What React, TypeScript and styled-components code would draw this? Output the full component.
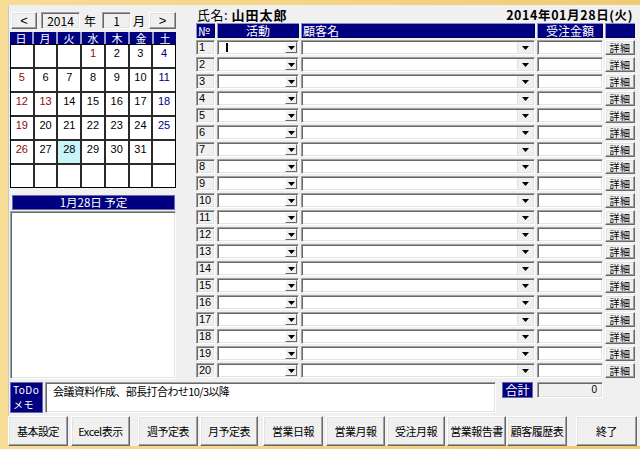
import React from 'react';
import styled, { createGlobalStyle, css } from 'styled-components';

const GlobalStyle = createGlobalStyle`
  html, body { margin: 0; padding: 0; background: #f0f0f0; }
  body { font-family: "Noto Sans CJK JP", "Noto Sans", sans-serif; }
  * { box-sizing: border-box; }
`;

const FONT = `"Noto Sans CJK JP", "Noto Sans", sans-serif`;
const NAVY = '#000080';

const raised = css`
  background: #f0f0f0;
  border: 1px solid;
  border-color: #ffffff #696969 #696969 #ffffff;
  box-shadow: inset -1px -1px 0 #a0a0a0, inset 1px 1px 0 #e3e3e3;
`;

const sunken = css`
  border: 1px solid;
  border-color: #a0a0a0 #ffffff #ffffff #a0a0a0;
  box-shadow: inset 1px 1px 0 #696969, inset -1px -1px 0 #e3e3e3;
`;

const Frame = styled.div`
  width: 640px;
  height: 449px;
  padding: 5px 0 3px 8px;
  background: linear-gradient(to right, #f7dc96, #f1cb74);
  font-family: ${FONT};
  color: #000;
  overflow: hidden;
`;

const Window = styled.div`
  height: 100%;
  background: #f0f0f0;
  box-shadow: inset 1px 0 0 #c8c8c8;
  display: flex;
  flex-direction: column;
`;

const TopArea = styled.div`
  display: flex;
  height: 375px;
`;

const LeftCol = styled.div`
  width: 168px;
  padding: 7px 0 0 2px;
  display: flex;
  flex-direction: column;
`;

const NavRow = styled.div`
  display: flex;
  align-items: center;
  height: 17px;
`;

const NavButton = styled.div<{ $ml: number; $w: number }>`
  ${raised};
  margin-left: ${p => p.$ml}px;
  width: ${p => p.$w}px;
  height: 17px;
  display: flex;
  align-items: center;
  justify-content: center;
  font-family: "Liberation Sans", sans-serif;
  font-size: 13px;
  line-height: 1;
`;

const NumBox = styled.div<{ $ml: number; $w: number }>`
  ${sunken};
  background: #f0f0f0;
  margin-left: ${p => p.$ml}px;
  width: ${p => p.$w}px;
  height: 17px;
  font-size: 12px;
  line-height: 15px;
  text-align: center;
`;

const Unit = styled.span<{ $ml: number }>`
  margin-left: ${p => p.$ml}px;
  font-size: 12px;
  line-height: 17px;
`;

const CalHead = styled.div`
  margin-top: 3px;
  height: 12px;
  display: grid;
  grid-template-columns: repeat(7, 1fr);
  column-gap: 2px;
  background: #9c9ccc;
`;

const CalHeadCell = styled.div`
  background: ${NAVY};
  color: #fff;
  font-size: 11px;
  line-height: 12px;
  text-align: center;
`;

const CalGrid = styled.div`
  height: 144px;
  display: grid;
  grid-template-columns: repeat(7, 1fr);
  grid-template-rows: repeat(6, 1fr);
  gap: 2px;
  background: #2a2a2a;
  border: 1px solid #000;
`;

const DayCell = styled.div<{ $color: string; $today?: boolean }>`
  background: ${p => (p.$today ? '#c9f4f8' : '#ffffff')};
  color: ${p => p.$color};
  font-family: "Liberation Sans", sans-serif;
  font-size: 11px;
  line-height: 12px;
  padding-top: 2px;
  text-align: center;
`;

const PlanHead = styled.div`
  margin: 7px 1px 0 2px;
  height: 15px;
  background: ${NAVY};
  border: 1px solid #6a6aa8;
  color: #fff;
  font-size: 11.5px;
  line-height: 13px;
  text-align: center;
`;

const PlanBox = styled.div`
  ${sunken};
  margin-top: 1px;
  height: 168px;
  background: #fff;
`;

const RightCol = styled.div`
  margin-left: 20px;
  width: 439px;
  display: flex;
  flex-direction: column;
`;

const NameRow = styled.div`
  height: 18px;
  display: flex;
  align-items: center;
  justify-content: space-between;
`;

const NameText = styled.div`
  font-size: 13px;
  padding-left: 1px;
  letter-spacing: 0.5px;
`;

const NameBold = styled.span`
  font-weight: bold;
  letter-spacing: 1px;
`;

const DateText = styled.div`
  font-size: 12.5px;
  font-weight: bold;
  letter-spacing: 0.6px;
  padding-right: 2px;
  white-space: nowrap;
`;

const COLS = '19px 82px 234px 66px 30px';

const HeadRow = styled.div`
  height: 15px;
  display: grid;
  grid-template-columns: ${COLS};
  column-gap: 2px;
`;

const HeadCell = styled.div<{ $align: 'left' | 'center' }>`
  background: ${NAVY};
  box-shadow: inset 1px 1px 0 #8e8ec8, inset -1px -1px 0 #000050;
  color: #fff;
  font-size: 12px;
  line-height: 15px;
  text-align: ${p => p.$align};
  padding-left: ${p => (p.$align === 'left' ? 2 : 0)}px;
  overflow: hidden;
  white-space: nowrap;
`;

const Rows = styled.div`
  margin-top: 2px;
  display: flex;
  flex-direction: column;
  gap: 2px;
`;

const Row = styled.div`
  height: 15px;
  display: grid;
  grid-template-columns: ${COLS};
  column-gap: 2px;
`;

const NoCell = styled.div`
  ${sunken};
  background: #f0f0f0;
  font-family: "Liberation Sans", sans-serif;
  font-size: 11px;
  line-height: 13px;
  padding-left: 2px;
  white-space: nowrap;
`;

const Combo = styled.div`
  ${sunken};
  background: #fff;
  display: flex;
  align-items: stretch;
  padding: 1px;
`;

const ComboText = styled.div`
  flex: 1;
  display: flex;
  align-items: center;
  padding-left: 7px;
`;

const Caret = styled.span`
  width: 2px;
  height: 9px;
  background: #000;
`;

const DropBtn = styled.div<{ $flat?: boolean; $w: number }>`
  width: ${p => p.$w}px;
  display: flex;
  align-items: center;
  justify-content: center;
  ${p =>
    p.$flat
      ? css`
          background: #f0f0f0;
          border-left: 1px solid #e2e2e2;
        `
      : css`
          background: #f0f0f0;
          border: 1px solid;
          border-color: #ffffff #696969 #696969 #ffffff;
        `}
`;

const AmountBox = styled.div`
  ${sunken};
  background: #fff;
`;

const DetailBtn = styled.div`
  ${raised};
  font-size: 10px;
  line-height: 13px;
  text-align: center;
  letter-spacing: 0.5px;
`;

const MemoRow = styled.div`
  margin-top: 2px;
  height: 31px;
  padding-left: 2px;
  display: flex;
  align-items: flex-start;
`;

const TodoLabel = styled.div`
  width: 33px;
  height: 31px;
  background: ${NAVY};
  border: 1px solid #6a6aa8;
  color: #fff;
  font-size: 10px;
  padding: 0 0 0 2px;
  letter-spacing: 0.5px;
  display: flex;
  flex-direction: column;
  justify-content: space-between;
`;

const TodoLine = styled.div`
  line-height: 14px;
  height: 14px;
`;

const MemoBox = styled.div`
  ${sunken};
  margin-left: 2px;
  width: 451px;
  height: 31px;
  background: #fff;
  font-size: 11px;
  line-height: 13px;
  padding: 2px 0 0 7px;
  letter-spacing: -0.6px;
  white-space: nowrap;
`;

const SumLabel = styled.div`
  margin-left: 6px;
  width: 31px;
  height: 16px;
  background: ${NAVY};
  border: 1px solid #6a6aa8;
  color: #fff;
  font-size: 12px;
  line-height: 14px;
  text-align: center;
`;

const SumBox = styled.div`
  ${sunken};
  margin-left: 4px;
  width: 66px;
  height: 16px;
  background: #f0f0f0;
  font-family: "Liberation Sans", sans-serif;
  font-size: 10px;
  line-height: 14px;
  text-align: right;
  padding-right: 5px;
`;

const ButtonRow = styled.div`
  margin-top: 3px;
  height: 30px;
  display: flex;
`;

const Button = styled.div<{ $ml: number; $w: number }>`
  ${raised};
  margin-left: ${p => p.$ml}px;
  width: ${p => p.$w}px;
  height: 30px;
  display: flex;
  align-items: center;
  justify-content: center;
  font-size: 11px;
  letter-spacing: -0.5px;
  white-space: nowrap;
`;

const Arrow: React.FC = () => (
  <svg width="7" height="4" viewBox="0 0 7 4">
    <polygon points="0,0 7,0 3.5,4" fill="#000" />
  </svg>
);

const DAYS = ['日', '月', '火', '水', '木', '金', '土'];
const HOLIDAYS = [1, 13];
const RED = '#8c0a0a';

const BUTTONS: [string, number, number][] = [
  ['基本設定', 0, 60],
  ['Excel表示', 3, 59],
  ['週予定表', 8, 60],
  ['月予定表', 2, 58],
  ['営業日報', 5, 60],
  ['営業月報', 3, 59],
  ['受注月報', 2, 58],
  ['営業報告書', 2, 59],
  ['顧客履歴表', 1, 60],
  ['終了', 9, 61],
];

export default function App() {
  const cells = Array.from({ length: 42 }, (_, i) => {
    const d = i - 2;
    return d >= 1 && d <= 31 ? d : null;
  });

  const colorFor = (i: number, d: number | null) => {
    if (d === null) return '#000';
    if (i % 7 === 0 || HOLIDAYS.includes(d)) return RED;
    if (i % 7 === 6) return NAVY;
    return '#000';
  };

  return (
    <>
      <GlobalStyle />
      <Frame>
        <Window>
          <TopArea>
            <LeftCol>
              <NavRow>
                <NavButton $ml={1} $w={26}>&lt;</NavButton>
                <NumBox $ml={4} $w={39}>2014</NumBox>
                <Unit $ml={4}>年</Unit>
                <NumBox $ml={6} $w={29}>1</NumBox>
                <Unit $ml={2}>月</Unit>
                <NavButton $ml={4} $w={27}>&gt;</NavButton>
              </NavRow>
              <CalHead>
                {DAYS.map(d => (
                  <CalHeadCell key={d}>{d}</CalHeadCell>
                ))}
              </CalHead>
              <CalGrid>
                {cells.map((d, i) => (
                  <DayCell key={i} $color={colorFor(i, d)} $today={d === 28}>
                    {d ?? ''}
                  </DayCell>
                ))}
              </CalGrid>
              <PlanHead>1月28日 予定</PlanHead>
              <PlanBox />
            </LeftCol>
            <RightCol>
              <NameRow>
                <NameText>
                  氏名: <NameBold>山田太郎</NameBold>
                </NameText>
                <DateText>2014年01月28日(火)</DateText>
              </NameRow>
              <HeadRow>
                <HeadCell $align="left">№</HeadCell>
                <HeadCell $align="center">活動</HeadCell>
                <HeadCell $align="left">顧客名</HeadCell>
                <HeadCell $align="center">受注金額</HeadCell>
                <HeadCell $align="center" />
              </HeadRow>
              <Rows>
                {Array.from({ length: 20 }, (_, i) => (
                  <Row key={i}>
                    <NoCell>{i + 1}</NoCell>
                    <Combo>
                      <ComboText>{i === 0 && <Caret />}</ComboText>
                      <DropBtn $w={12}>
                        <Arrow />
                      </DropBtn>
                    </Combo>
                    <Combo>
                      <ComboText />
                      <DropBtn $w={16} $flat>
                        <Arrow />
                      </DropBtn>
                    </Combo>
                    <AmountBox />
                    <DetailBtn>詳細</DetailBtn>
                  </Row>
                ))}
              </Rows>
            </RightCol>
          </TopArea>
          <MemoRow>
            <TodoLabel>
              <TodoLine>ToDo</TodoLine>
              <TodoLine>メモ</TodoLine>
            </TodoLabel>
            <MemoBox>会議資料作成、部長打合わせ10/3以降</MemoBox>
            <SumLabel>合計</SumLabel>
            <SumBox>0</SumBox>
          </MemoRow>
          <ButtonRow>
            {BUTTONS.map(([label, ml, w]) => (
              <Button key={label} $ml={ml} $w={w}>
                {label}
              </Button>
            ))}
          </ButtonRow>
        </Window>
      </Frame>
    </>
  );
}
